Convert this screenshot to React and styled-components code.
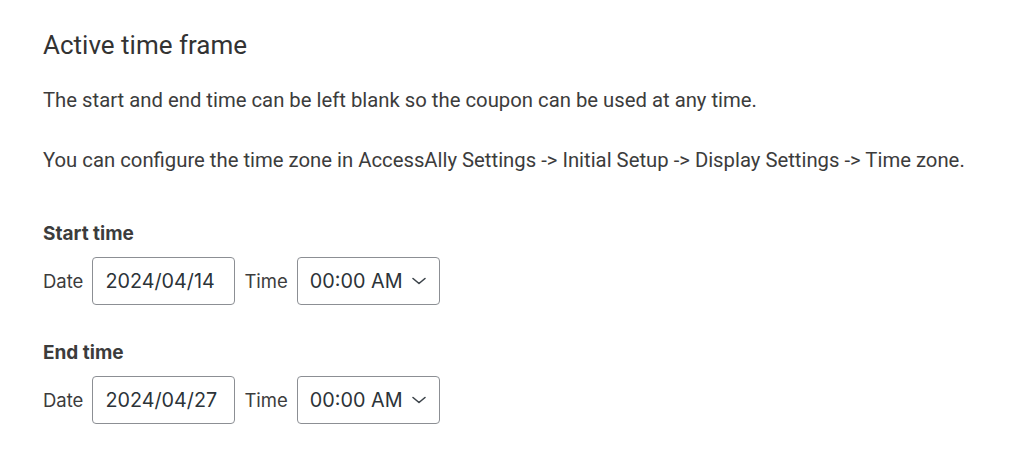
import React from 'react';
import styled, { createGlobalStyle } from 'styled-components';

const Global = createGlobalStyle`
  body {
    margin: 0;
    background: #fff;
    font-family: Roboto, "Liberation Sans", sans-serif;
    color: #3c3c3c;
  }
`;

const Page = styled.div`
  padding: 29px 43px 0;
`;

const Title = styled.h2`
  margin: 0 0 27px;
  font-size: 26px;
  font-weight: 400;
  line-height: 32px;
  color: #333;
`;

const Text = styled.p`
  margin: 0 0 36px;
  font-size: 20.3px;
  line-height: 24px;
  color: #3c3c3c;
`;

const Group = styled.div`
  margin-top: ${(p) => p.$top}px;
`;

const Label = styled.div`
  font-family: Inter, "Noto Sans", sans-serif;
  font-weight: 700;
  font-size: 19px;
  line-height: 24px;
  color: #3c3c3c;
  margin-bottom: 11px;
`;

const Row = styled.div`
  display: flex;
  align-items: center;
`;

const FieldLabel = styled.span`
  font-family: Inter, "Noto Sans", sans-serif;
  font-size: 18.5px;
  color: #3c3c3c;
  margin-right: 9px;
`;

const Box = styled.div`
  box-sizing: border-box;
  width: 143px;
  height: 48px;
  border: 1px solid #8c8f94;
  border-radius: 4px;
  display: flex;
  align-items: center;
  justify-content: space-between;
  padding: 0 12px;
  font-family: Inter, "Noto Sans", sans-serif;
  font-size: 19.8px;
  color: #2c3338;
  margin-right: ${(p) => p.$gap || 0}px;
`;

const Chevron = () => (
  <svg width="16" height="16" viewBox="0 0 16 16" fill="none">
    <path d="M2 5.5l6 5 6-5" stroke="#3c434a" strokeWidth="1.6" strokeLinecap="round" strokeLinejoin="round" />
  </svg>
);

function TimeRow({ title, date, top }) {
  return (
    <Group $top={top}>
      <Label>{title}</Label>
      <Row>
        <FieldLabel>Date</FieldLabel>
        <Box $gap={9}>{date}</Box>
        <FieldLabel>Time</FieldLabel>
        <Box>
          <span>00:00 AM</span>
          <Chevron />
        </Box>
      </Row>
    </Group>
  );
}

export default function App() {
  return (
    <Page>
      <Global />
      <Title>Active time frame</Title>
      <Text>The start and end time can be left blank so the coupon can be used at any time.</Text>
      <Text>You can configure the time zone in AccessAlly Settings -&gt; Initial Setup -&gt; Display Settings -&gt; Time zone.</Text>
      <TimeRow title="Start time" date="2024/04/14" top={50} />
      <TimeRow title="End time" date="2024/04/27" top={36} />
    </Page>
  );
}
